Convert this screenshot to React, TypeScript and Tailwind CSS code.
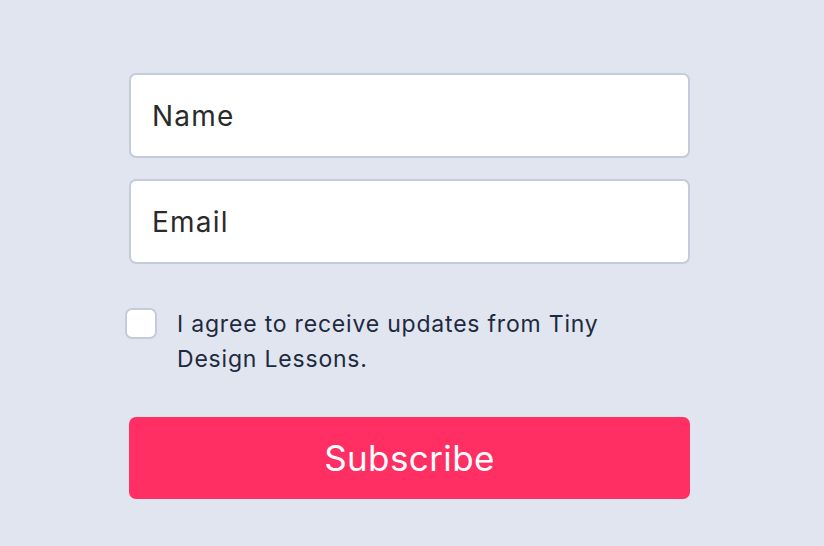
import React from 'react';

// Newsletter signup form
const App: React.FC = () => {
  return (
    <div className="min-h-[546px] w-full bg-[#e1e5f0] font-['Inter',sans-serif]">
      <form className="ml-[129px] flex w-[561px] flex-col pt-[73px]">
        <input
          type="text"
          placeholder="Name"
          className="h-[85px] w-full rounded-[7px] border-2 border-[#c5cbda] bg-white px-[21px] text-[28px] tracking-[1.2px] text-[#2a2a2a] outline-none placeholder:text-[#2a2a2a]"
        />
        <input
          type="email"
          placeholder="Email"
          className="mt-[21px] h-[85px] w-full rounded-[7px] border-2 border-[#c5cbda] bg-white px-[21px] text-[28px] tracking-[1.2px] text-[#2a2a2a] outline-none placeholder:text-[#2a2a2a]"
        />

        {/* Consent checkbox */}
        <label className="-ml-[4px] mt-[43px] flex items-start gap-[20px]">
          <span className="mt-[1px] h-[31px] w-[32px] shrink-0 rounded-[7px] border-2 border-[#c5cbda] bg-white" />
          <span className="w-[445px] text-[23px] leading-[35px] tracking-[0.8px] text-[#1e2a3f]">
            I agree to receive updates from Tiny Design Lessons.
          </span>
        </label>

        <button
          type="button"
          className="mt-[40px] h-[82px] w-full rounded-[7px] bg-[#ff2e63] text-[35px] tracking-[0.4px] text-white"
        >
          Subscribe
        </button>
      </form>
    </div>
  );
};

export default App;
